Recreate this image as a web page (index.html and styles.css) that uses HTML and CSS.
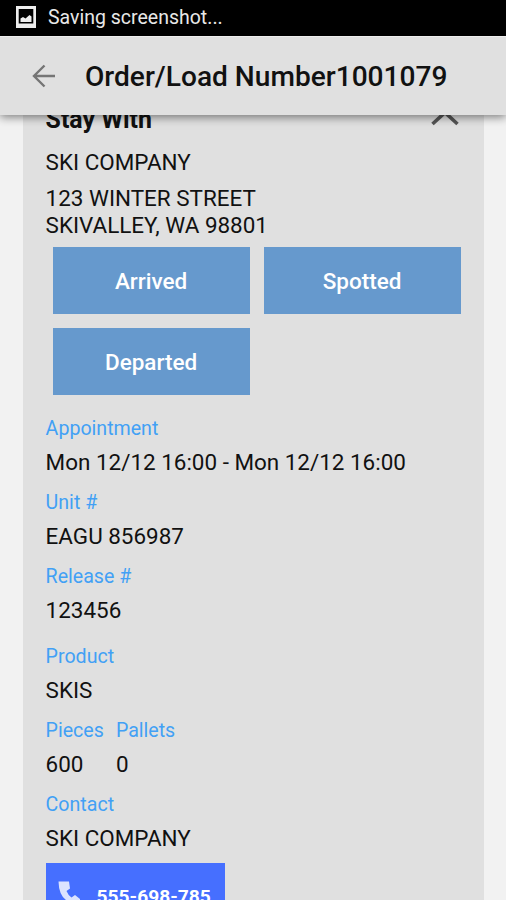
FILE: index.html
```
<!DOCTYPE html>
<html lang="en">
<head>
    <meta charset="UTF-8">
    <meta name="viewport" content="width=device-width, initial-scale=1.0">
    <title>Order/Load Number1001079</title>
    <link rel="stylesheet" href="styles.css">
</head>
<body>
    <div class="status-bar">
        <svg class="status-icon" width="20" height="22" viewBox="0 0 20 22">
            <path fill="#eee" fill-rule="evenodd" d="M0 0h20v22H0zM2.700 3v14.500h14.600V3z"/>
            <path fill="#eee" d="M4.500 16v-3.500l2.500-1.500 2.500 1.500 4-3.500 2 1.500v5.500z"/>
        </svg>
        <span class="status-text">Saving screenshot...</span>
    </div>
    <header>
        <svg class="back" width="24" height="24" viewBox="0 0 24 24">
            <path fill="none" stroke="#757575" stroke-width="2.400" d="M23 12H2.500M12.500 1.500L2 12l10.500 10.500"/>
        </svg>
        <h1>Order/Load Number1001079</h1>
    </header>
    <main>
        <section class="card">
            <div class="card-title">
                <h2>Stay With</h2>
                <svg class="chevron" width="28" height="16" viewBox="0 0 28 16">
                    <path fill="none" stroke="#555" stroke-width="3.600" d="M1.500 14L14 2.500l12.500 11.500"/>
                </svg>
            </div>
            <p class="value">SKI COMPANY</p>
            <p class="value address">123 WINTER STREET<br>SKIVALLEY, WA 98801</p>
            <div class="buttons">
                <button>Arrived</button>
                <button>Spotted</button>
                <button>Departed</button>
            </div>
            <div class="field">
                <p class="label">Appointment</p>
                <p class="value">Mon 12/12 16:00 - Mon 12/12 16:00</p>
            </div>
            <div class="field">
                <p class="label">Unit #</p>
                <p class="value">EAGU 856987</p>
            </div>
            <div class="field last">
                <p class="label">Release #</p>
                <p class="value">123456</p>
            </div>
            <div class="field">
                <p class="label">Product</p>
                <p class="value">SKIS</p>
            </div>
            <div class="field-row">
                <div class="field">
                    <p class="label">Pieces</p>
                    <p class="value">600</p>
                </div>
                <div class="field">
                    <p class="label">Pallets</p>
                    <p class="value">0</p>
                </div>
            </div>
            <div class="field">
                <p class="label">Contact</p>
                <p class="value">SKI COMPANY</p>
            </div>
            <a class="call">
                <svg width="24" height="24" viewBox="0 0 24 24">
                    <path fill="#dbe3ff" d="M1.500 1.500H12L13 8.500 9.500 11Q11 15 14.500 17.500L18 15l5 4v4.500h-4Q2 22 1.500 1.500z"/>
                </svg>
                <span>555-698-785</span>
            </a>
        </section>
    </main>
</body>
</html>
```

FILE: styles.css
```
* {
    box-sizing: border-box;
}

body {
    font-family: Roboto, "Liberation Sans", sans-serif;
    margin: 0;
    height: 900px;
    overflow: hidden;
    display: flex;
    flex-direction: column;
    background-color: #f2f2f2;
    color: #111;
}

h1, h2, p {
    margin: 0;
}

.status-bar {
    flex: none;
    display: flex;
    align-items: center;
    gap: 12px;
    height: 36px;
    padding: 0 0 2px 16px;
    background-color: #000;
    color: #e8e8e8;
}

.status-text {
    font-size: 19.5px;
}

header {
    flex: none;
    display: flex;
    align-items: center;
    gap: 29px;
    height: 79px;
    padding: 0 0 1px 32px;
    background-color: #e0e0e0;
    border-top: 1px solid #eee;
    box-shadow: 0 2px 9px rgba(0, 0, 0, 0.5);
    position: relative;
    z-index: 1;
}

header h1 {
    font-size: 28.1px;
    font-weight: 500;
    line-height: 32px;
    padding-top: 2px;
    white-space: nowrap;
}

main {
    flex: 1;
    min-height: 0;
    overflow: hidden;
    padding: 0 22px 0 23px;
}

.card {
    height: 100%;
    padding: 0 23px 0 22.6px;
    background-color: #e0e0e0;
}

.card-title {
    display: flex;
    justify-content: space-between;
    height: 34px;
}

.card-title h2 {
    font-size: 24.9px;
    font-weight: 700;
    line-height: 28px;
    margin-top: -9px;
}

.chevron {
    margin: -5px 2px 0 0;
}

.value {
    font-size: 22.45px;
    line-height: 27px;
    white-space: nowrap;
}

.address {
    margin-top: 9px;
}

.buttons {
    display: grid;
    grid-template-columns: 197px 197px;
    grid-auto-rows: 67px;
    gap: 14px;
    margin: 8px 0 22px 7px;
}

button {
    padding: 0;
    border: none;
    background-color: #6699cd;
    color: #fff;
    font-family: inherit;
    font-size: 22.5px;
    font-weight: 500;
}

.field {
    margin-bottom: 15px;
}

.field.last {
    margin-bottom: 21px;
}

.field-row {
    display: flex;
    gap: 12px;
}

.label {
    font-size: 19.6px;
    line-height: 24px;
    margin-bottom: 8px;
    color: #42a0f5;
}

.call {
    display: flex;
    gap: 16px;
    width: 179px;
    height: 67px;
    margin-top: -4px;
    padding: 17px 0 0 11px;
    background-color: #466fff;
    color: #fff;
    font-size: 19.2px;
    font-weight: 700;
}

.call span {
    line-height: 34px;
}
```
